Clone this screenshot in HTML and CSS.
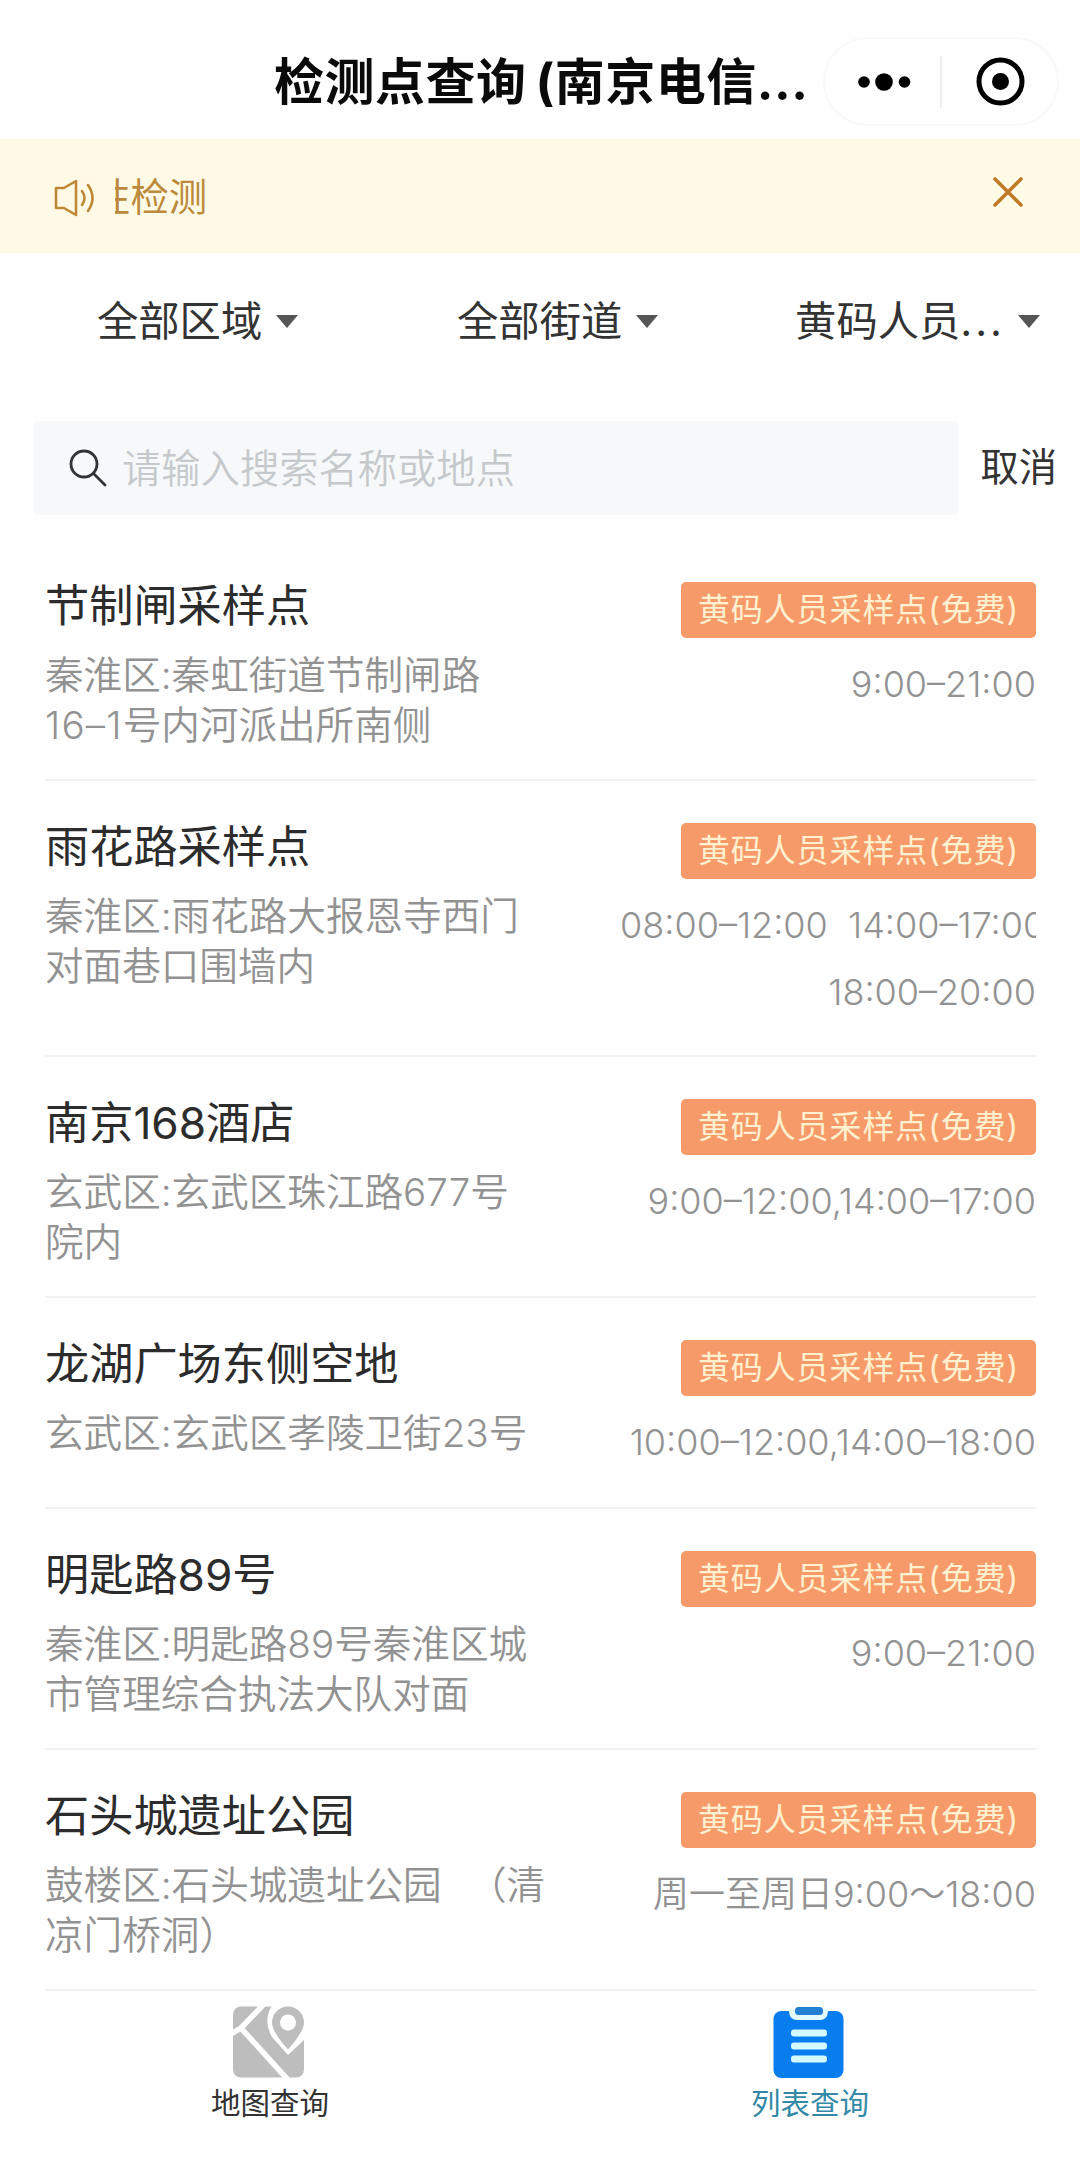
FILE: index.html
```
<!DOCTYPE html>
<html lang="zh-CN">

<head>
  <meta charset="UTF-8">
  <meta name="viewport" content="width=device-width, initial-scale=1.0">
  <title>检测点查询</title>
  <link rel="stylesheet" href="styles.css">
</head>

<body>
  <header class="navbar">
    <h1 class="navbar-title">检测点查询<span class="paren">(</span>南京电信<span class="dots">...</span></h1>
    <div class="capsule">
      <svg class="capsule-more" width="46" height="18" viewBox="0 0 46 18">
        <circle cx="4" cy="9" r="5.8"/>
        <circle cx="24" cy="9" r="8.8"/>
        <circle cx="44.500" cy="9" r="5.8"/>
      </svg>
      <span class="capsule-line"></span>
      <svg class="capsule-close" width="50" height="50" viewBox="0 0 50 50">
        <circle cx="25.500" cy="24.500" r="21.5" fill="none" stroke="#000" stroke-width="5"/>
        <circle cx="25.500" cy="24.500" r="8.5"/>
      </svg>
    </div>
  </header>

  <div class="notice">
    <svg class="notice-icon" width="42" height="40" viewBox="0 0 42 40" fill="none" stroke="#bf8836" stroke-width="2.6" stroke-linejoin="round" stroke-linecap="round">
      <path d="M3 10h8L23 3v34L11 30H3z"/>
      <path d="M29 13q5 7 0 14"/>
      <path d="M35 7q9 13 0 26"/>
    </svg>
    <div class="notice-text"><span>性检测</span></div>
    <svg class="notice-close" width="30" height="30" viewBox="0 0 30 30" fill="none" stroke="#c07a26" stroke-width="3.6" stroke-linecap="round">
      <path d="M2 2L28 28M28 2L2 28"/>
    </svg>
  </div>

  <div class="filters">
    <div class="filter">全部区域<i class="arrow"></i></div>
    <div class="filter">全部街道<i class="arrow"></i></div>
    <div class="filter">黄码人员<span class="dots">...</span><i class="arrow"></i></div>
  </div>

  <div class="search">
    <div class="search-box">
      <svg width="38" height="38" viewBox="0 0 38 38" fill="none" stroke="#333" stroke-width="2.8" stroke-linecap="round">
        <circle cx="15" cy="15" r="13"/>
        <path d="M24.5 24.5L36 36"/>
      </svg>
      <span class="placeholder">请输入搜索名称或地点</span>
    </div>
    <span class="cancel">取消</span>
  </div>

  <main class="list">
    <section class="item">
      <div class="info">
        <h2>节制闸采样点</h2>
        <p>秦淮区:秦虹街道节制闸路<br><span class="num">16–1</span>号内河派出所南侧</p>
      </div>
      <div class="side">
        <span class="badge">黄码人员采样点(免费)</span>
        <div class="time">9:00–21:00</div>
      </div>
    </section>

    <section class="item">
      <div class="info">
        <h2>雨花路采样点</h2>
        <p>秦淮区:雨花路大报恩寺西门<br>对面巷口围墙内</p>
      </div>
      <div class="side">
        <span class="badge">黄码人员采样点(免费)</span>
        <div class="time time-cut">08:00–12:00&nbsp; 14:00–17:00</div>
        <div class="time">18:00–20:00</div>
      </div>
    </section>

    <section class="item">
      <div class="info">
        <h2>南京168酒店</h2>
        <p>玄武区:玄武区珠江路677号<br>院内</p>
      </div>
      <div class="side">
        <span class="badge">黄码人员采样点(免费)</span>
        <div class="time">9:00–12:00,14:00–17:00</div>
      </div>
    </section>

    <section class="item">
      <div class="info">
        <h2>龙湖广场东侧空地</h2>
        <p>玄武区:玄武区孝陵卫街23号</p>
      </div>
      <div class="side">
        <span class="badge">黄码人员采样点(免费)</span>
        <div class="time">10:00–12:00,14:00–18:00</div>
      </div>
    </section>

    <section class="item">
      <div class="info">
        <h2>明匙路89号</h2>
        <p>秦淮区:明匙路89号秦淮区城<br>市管理综合执法大队对面</p>
      </div>
      <div class="side">
        <span class="badge">黄码人员采样点(免费)</span>
        <div class="time">9:00–21:00</div>
      </div>
    </section>

    <section class="item">
      <div class="info">
        <h2>石头城遗址公园</h2>
        <p>鼓楼区:石头城遗址公园&ensp;&thinsp;（清<br>凉门桥洞）</p>
      </div>
      <div class="side">
        <span class="badge">黄码人员采样点(免费)</span>
        <div class="time">周一至周日9:00～18:00</div>
      </div>
    </section>
  </main>

  <nav class="tabbar">
    <a class="tab">
      <svg width="72" height="72" viewBox="0 0 72 72">
        <rect x="0" y="0.5" width="71" height="71" rx="8" fill="#bdbdbd"/>
        <path d="M-2 28L8 22L32 -3M7 21L56 75" fill="none" stroke="#fff" stroke-width="5.5"/>
        <path d="M40 -2H74V31L55 49L39 31Q29 14 40 -2z" fill="#fff"/>
        <path d="M55 0.500a16 16 0 0 1 16 16q0 9-16 27q-16-18-16-27a16 16 0 0 1 16-16z" fill="#bdbdbd"/>
        <circle cx="55" cy="16.500" r="8" fill="#fff"/>
      </svg>
      <span>地图查询</span>
    </a>
    <a class="tab active">
      <svg width="72" height="72" viewBox="0 0 72 72">
        <rect x="0.5" y="5" width="70" height="67" rx="8" fill="#087df0"/>
        <path d="M16 3h39v3q-1 8-8 8H24q-7 0-8-8z" fill="#e2fbff"/>
        <rect x="22" y="1" width="28" height="8" rx="3.500" fill="#2380d2"/>
        <g fill="#d3faff">
          <rect x="18" y="23.500" width="36" height="7" rx="3"/>
          <rect x="18" y="36.500" width="36" height="7" rx="3"/>
          <rect x="18" y="49.500" width="36" height="7" rx="3"/>
        </g>
      </svg>
      <span>列表查询</span>
    </a>
  </nav>
</body>

</html>
```
FILE: styles.css
```
* {
  box-sizing: border-box;
}

body {
  margin: 0;
  width: 1080px;
  height: 2181px;
  overflow: hidden;
  background: #fefefe;
  color: #333;
  font-family: Inter, "Noto Sans CJK SC", sans-serif;
}

h1, h2, p {
  margin: 0;
}

svg {
  display: block;
  flex: none;
}

/* 顶部标题栏 */
.navbar {
  height: 139px;
  padding: 37px 21px 0 274px;
  display: flex;
  justify-content: space-between;
}

.navbar-title {
  display: flex;
  height: 90px;
  line-height: 90px;
  font-size: 50px;
  font-weight: 700;
  letter-spacing: 0.5px;
  color: #0a0a0a;
  white-space: nowrap;
}

.navbar-title .paren {
  margin-left: 9px;
}

.navbar-title .dots {
  letter-spacing: 0.5px;
}

.capsule {
  width: 236px;
  height: 89px;
  padding: 0 32px 0 35px;
  display: flex;
  align-items: center;
  justify-content: space-between;
  border: 2px solid #f8f8f8;
  border-radius: 45px;
}

.capsule-more {
  overflow: visible;
}

.capsule-line {
  width: 2px;
  height: 52px;
  background: #eee;
}

/* 通知条 */
.notice {
  height: 114px;
  padding: 0 57px 0 53px;
  display: flex;
  align-items: center;
  background: #fffae6;
}

.notice-icon {
  margin-top: 3px;
}

.notice-text {
  flex: 1;
  margin-left: 20px;
  padding-top: 2px;
  overflow: hidden;
  font-size: 38.4px;
  line-height: 60px;
  color: #bb8a3c;
}

.notice-text span {
  display: block;
  margin-left: -23px;
}

.notice-close {
  margin-bottom: 8px;
}

/* 筛选 */
.filters {
  height: 168px;
  padding: 38px 40px 0 97px;
  display: flex;
  align-items: flex-start;
  justify-content: space-between;
  line-height: 60px;
  font-size: 41.3px;
}

.filter {
  display: flex;
  align-items: center;
}

.filter:nth-child(2) {
  margin-left: 22px;
}

.filter .dots {
  letter-spacing: 3px;
}

.arrow {
  margin-left: 14px;
  border: 11.5px solid transparent;
  border-top: 13px solid #555;
  border-bottom: 0;
}

.filter .dots + .arrow {
  margin-left: 13px;
}

/* 搜索 */
.search {
  height: 94px;
  padding: 0 23px 0 34px;
  display: flex;
  align-items: center;
  justify-content: space-between;
}

.search-box {
  width: 924px;
  height: 94px;
  padding-left: 35px;
  display: flex;
  align-items: center;
  background: #f6f8fa;
  border-radius: 4px;
}

.placeholder {
  margin: -6px 0 0 15px;
  font-size: 39.3px;
  font-weight: 350;
  color: #c6c9cb;
}

.cancel {
  margin-top: -7px;
  font-size: 38.3px;
}

/* 采样点列表 */
.list {
  margin: 25px 44px 0 45px;
}

.item {
  min-height: 211px;
  padding-bottom: 29px;
  display: flex;
  justify-content: space-between;
  border-bottom: 2px solid #f1f1f1;
}

.info {
  padding-top: 36px;
  white-space: nowrap;
}

.info h2 {
  margin-bottom: 14px;
  line-height: 60px;
  font-size: 44.2px;
  font-weight: 400;
  color: #2c2c2c;
}

.info p {
  line-height: 50px;
  font-size: 38.6px;
  font-weight: 350;
  color: #929292;
}

.info .num {
  letter-spacing: 1.2px;
}

.side {
  width: 416px;
  padding-top: 42px;
  display: flex;
  flex-direction: column;
  align-items: flex-end;
}

.badge {
  width: 355px;
  height: 56px;
  margin-bottom: 13px;
  line-height: 55px;
  text-align: center;
  font-size: 32px;
  letter-spacing: 0.9px;
  color: #fff0cf;
  background: #f79a6a;
  border-radius: 5px;
}

.time {
  line-height: 67px;
  font-size: 36px;
  font-weight: 350;
  color: #929292;
  white-space: nowrap;
}

.time-cut {
  width: 416px;
  overflow: hidden;
}

/* 底部导航 */
.tabbar {
  padding-top: 15px;
  display: flex;
}

.tab {
  flex: 1;
  display: flex;
  flex-direction: column;
  align-items: center;
  font-size: 29.5px;
  line-height: 50px;
}

.tab svg {
  margin-right: 2px;
}

.tab.active {
  color: #3489a6;
}
```
